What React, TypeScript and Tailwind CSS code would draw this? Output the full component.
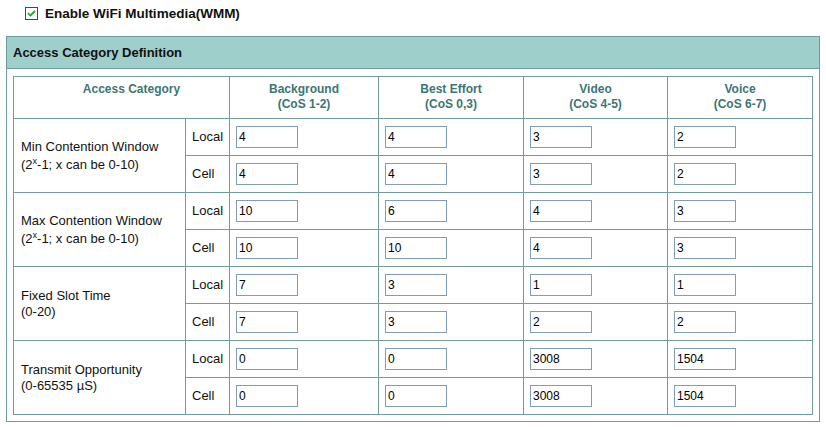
import React from "react";

type Row = { label: string[]; sup?: boolean; local: string[]; cell: string[] };

const rows: Row[] = [
  { label: ["Min Contention Window", "(2x-1; x can be 0-10)"], sup: true, local: ["4", "4", "3", "2"], cell: ["4", "4", "3", "2"] },
  { label: ["Max Contention Window", "(2x-1; x can be 0-10)"], sup: true, local: ["10", "6", "4", "3"], cell: ["10", "10", "4", "3"] },
  { label: ["Fixed Slot Time", "(0-20)"], local: ["7", "3", "1", "1"], cell: ["7", "3", "2", "2"] },
  { label: ["Transmit Opportunity", "(0-65535 µS)"], local: ["0", "0", "3008", "1504"], cell: ["0", "0", "3008", "1504"] },
];

const heads: [string, string][] = [
  ["Background", "(CoS 1-2)"],
  ["Best Effort", "(CoS 0,3)"],
  ["Video", "(CoS 4-5)"],
  ["Voice", "(CoS 6-7)"],
];

function Input({ v }: { v: string }) {
  return (
    <div className="flex h-full items-center bg-white pl-[6px]">
      <input
        readOnly
        value={v}
        className="box-border h-[22px] w-[62px] border border-[#7f9db9] bg-white pl-[2px] text-[12px] text-black outline-none"
        style={{ fontFamily: '"Liberation Sans", Arial, sans-serif' }}
      />
    </div>
  );
}

export default function App() {
  return (
    <div
      className="h-[427px] w-[826px] bg-white text-black"
      style={{ fontFamily: '"Liberation Sans", Arial, sans-serif' }}
    >
      <div className="flex h-[26px] items-center gap-[7px] pl-[25px] pt-[1px]">
        <div className="flex h-[13px] w-[13px] items-center justify-center border border-[#1c5180] bg-white">
          <svg width="9" height="9" viewBox="0 0 9 9">
            <path d="M1 4.2 L3.4 6.6 L8 2" fill="none" stroke="#21a121" strokeWidth="1.8" />
          </svg>
        </div>
        <span className="text-[13.5px] font-bold leading-none text-[#111]">Enable WiFi Multimedia(WMM)</span>
      </div>
      <div className="ml-[6px] mt-[10px] w-[814px] border border-[#6f9c9c] bg-white">
        <div className="flex h-[32px] items-center border-b border-[#6f9c9c] bg-[#9ecfcb] pl-[6px] text-[13px] font-bold text-[#111]">
          Access Category Definition
        </div>
        <div className="pb-[6px] pl-[6px] pr-[6px] pt-[7px]">
          <div className="grid grid-cols-[171px_43px_148px_144px_143px_144px] grid-rows-[41px_repeat(8,36px)] gap-px bg-[#6f9c9c] p-px text-[13px]">
            <div className="col-span-2 bg-white pl-[20px] pt-[5px] text-center text-[12px] font-bold leading-[15px] text-[#3b7676]">
              Access Category
            </div>
            {heads.map(([a, b]) => (
              <div key={a} className="flex flex-col items-center bg-white pt-[5px] text-[12px] font-bold leading-[15px] text-[#3b7676]">
                <span>{a}</span>
                <span>{b}</span>
              </div>
            ))}
            {rows.map((r) => (
              <React.Fragment key={r.label[0]}>
                <div className="row-span-2 flex flex-col justify-center bg-white pl-[7px] leading-[16px] text-[#111]">
                  <span>{r.label[0]}</span>
                  {r.sup ? (
                    <span className="pt-[2px]">
                      (2<sup className="text-[9px]">x</sup>-1; x can be 0-10)
                    </span>
                  ) : (
                    <span>{r.label[1]}</span>
                  )}
                </div>
                <div className="flex items-center bg-white pl-[6px] text-[#111]">Local</div>
                {r.local.map((v, i) => (
                  <Input key={"l" + i} v={v} />
                ))}
                <div className="flex items-center bg-white pl-[6px] text-[#111]">Cell</div>
                {r.cell.map((v, i) => (
                  <Input key={"c" + i} v={v} />
                ))}
              </React.Fragment>
            ))}
          </div>
        </div>
      </div>
    </div>
  );
}
